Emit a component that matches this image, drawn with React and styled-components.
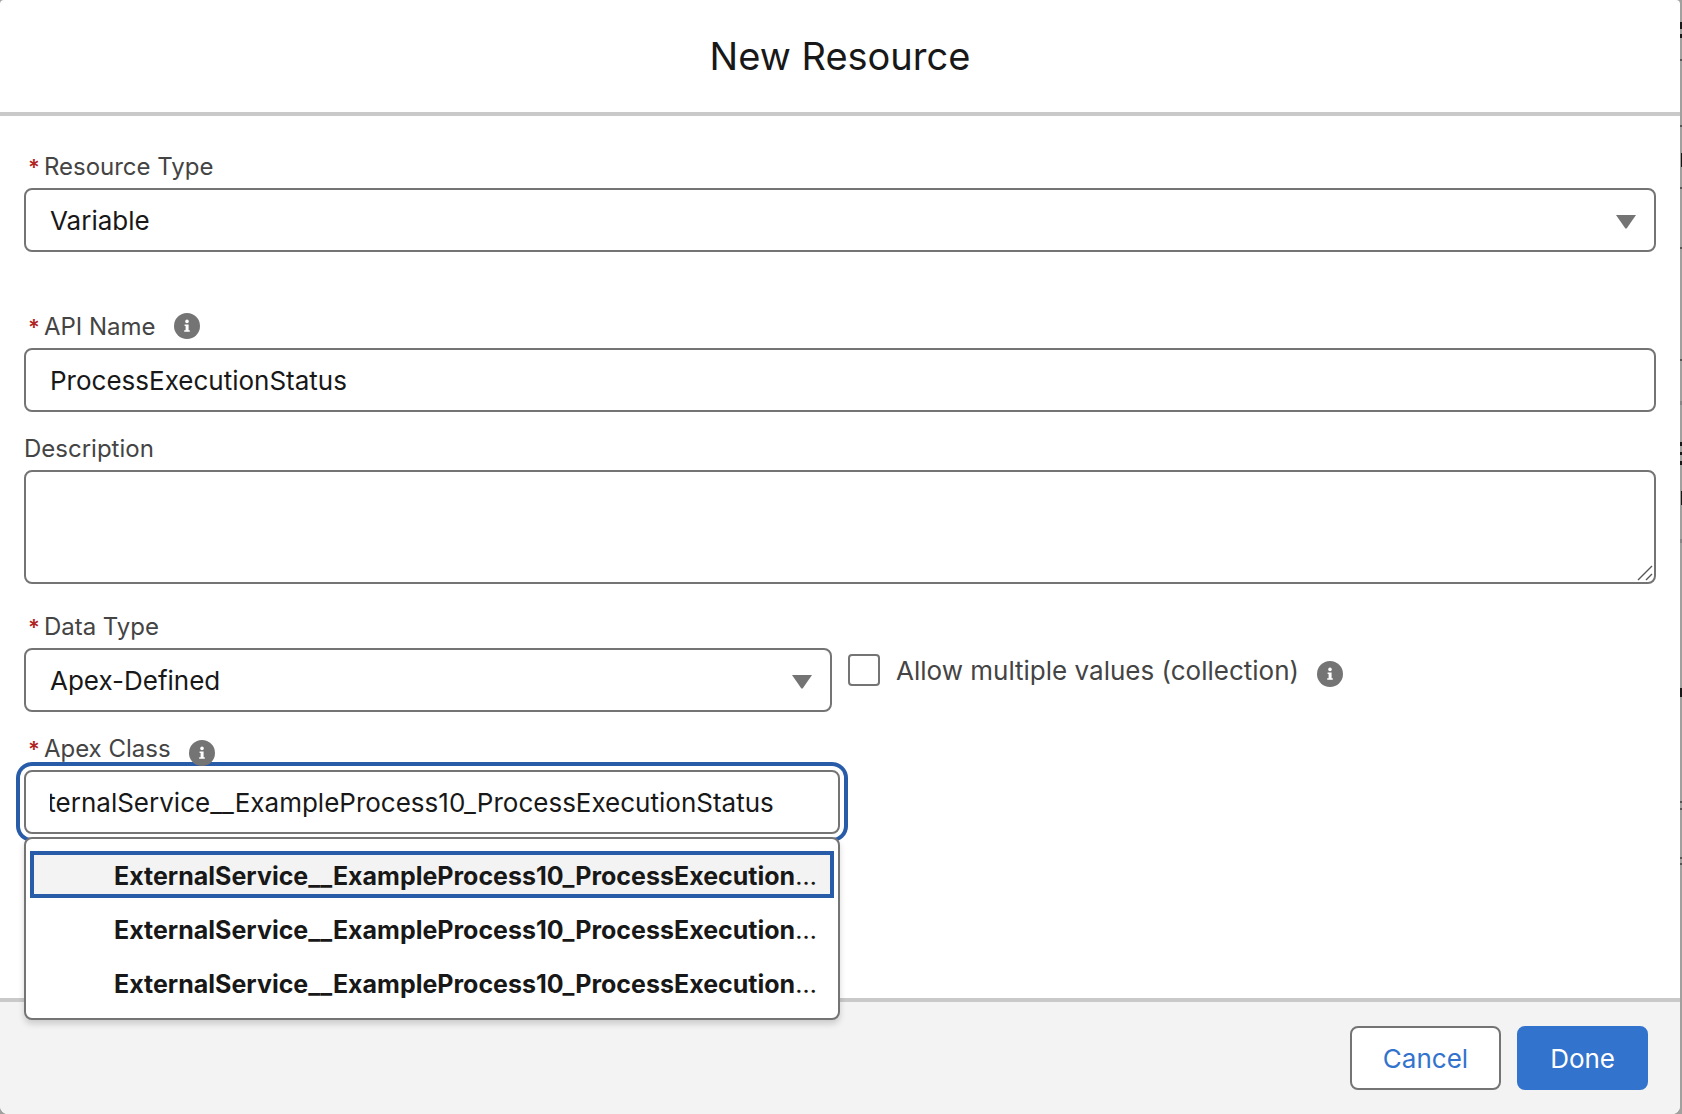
import React, { useLayoutEffect, useRef, useState } from 'react';
import styled, { createGlobalStyle } from 'styled-components';

const GlobalStyle = createGlobalStyle`
    * {
        box-sizing: border-box;
    }

    body {
        margin: 0;
        background: #a0a09f;
        color: #181818;
        font-family: Inter, "Liberation Sans", sans-serif;
        font-size: 26px;
    }
`;

const Page = styled.div`
    position: relative;
    display: flex;
    min-height: 100vh;
    padding-right: 2px;
`;

const PageEdge = styled.svg`
    position: absolute;
    top: 0;
    right: 0;
`;

const Modal = styled.section`
    display: flex;
    flex: 1;
    flex-direction: column;
    min-width: 0;
    border-radius: 4px 4px 8px 8px;
    background: #fff;
`;

const Header = styled.header`
    padding: 32px 24px;
    border-bottom: 4px solid #c9c9c9;
    text-align: center;
`;

const Title = styled.h1`
    margin: 0;
    font-size: 38px;
    font-weight: 400;
    line-height: 48px;
`;

const Body = styled.form`
    flex: 1;
    padding: 32px 24px;
`;

const Field = styled.div`
    width: ${props => props.$half ? '50%' : 'auto'};
    margin-bottom: ${props => props.$space || 18}px;
`;

const LabelRow = styled.div`
    display: flex;
    align-items: center;
    height: 36px;
    margin-bottom: 4px;
`;

const Label = styled.label`
    padding-top: 2px;
    color: #444;
    font-size: 24px;
    line-height: 36px;
`;

const Required = styled.abbr`
    margin: 0 4px;
    color: #b0241f;
    font-size: 22px;
    font-weight: 600;
    text-decoration: none;
`;

const InfoButton = styled.button`
    position: relative;
    z-index: 2;
    display: block;
    width: 26px;
    height: 26px;
    margin: ${props => props.$drop || 0}px 0 0 18px;
    padding: 0;
    border: 0;
    background: none;
`;

const Control = styled.div`
    position: relative;
`;

const Input = styled.input`
    display: block;
    width: 100%;
    height: 64px;
    padding: 0 ${props => props.$focused ? 64 : 24}px 0 24px;
    border: 2px solid #747474;
    border-radius: 8px;
    outline: none;
    background: #fff;
    color: inherit;
    font: inherit;
    box-shadow: ${props => props.$focused ? '0 0 0 4px #fff, 0 0 0 8px #285ca8' : 'none'};
`;

const Select = styled.select`
    display: block;
    width: 100%;
    height: 64px;
    padding: 0 64px 0 24px;
    border: 2px solid #747474;
    border-radius: 8px;
    appearance: none;
    background: #fff;
    color: inherit;
    font: inherit;
`;

const SelectArrow = styled.svg`
    position: absolute;
    top: 27px;
    right: 20px;
    pointer-events: none;
`;

const TextArea = styled.textarea`
    display: block;
    width: 100%;
    height: 114px;
    padding: 12px 24px;
    border: 2px solid #747474;
    border-radius: 8px;
    background: #fff;
    color: inherit;
    font: inherit;
    resize: none;
`;

const Grip = styled.svg`
    position: absolute;
    right: 3px;
    bottom: 3px;
    pointer-events: none;
`;

const Columns = styled.div`
    display: grid;
    grid-template-columns: 1fr 1fr;
    gap: 16px;
`;

const CheckboxRow = styled.div`
    display: flex;
    align-items: center;
    height: 32px;
    margin-top: 46px;
`;

const Checkbox = styled.input`
    flex: none;
    width: 32px;
    height: 32px;
    margin: 0 16px 0 0;
    border: 2px solid #747474;
    border-radius: 4px;
    appearance: none;
    background: #fff;

    &:checked {
        background: #3273cd;
    }
`;

const CheckboxLabel = styled.label`
    padding-top: 2px;
    color: #444;
    line-height: 32px;
`;

const Menu = styled.ul`
    position: absolute;
    top: 67px;
    left: 0;
    right: 0;
    z-index: 1;
    display: flex;
    flex-direction: column;
    gap: 7px;
    margin: 0;
    padding: 12px 4px;
    border: 2px solid #747474;
    border-radius: 8px;
    background: #fff;
    list-style: none;
    box-shadow: 0 4px 6px rgba(0, 0, 0, 0.16);
`;

const Option = styled.li`
    overflow: hidden;
    height: 47px;
    padding: 4px 12px 0 84px;
    background: ${props => props.$active ? '#f3f3f3' : '#fff'};
    box-shadow: ${props => props.$active ? 'inset 0 0 0 4px #285ca8' : 'none'};
    font-size: 25px;
    line-height: 43px;
    text-overflow: ellipsis;
    white-space: nowrap;
`;

const Footer = styled.footer`
    display: flex;
    justify-content: flex-end;
    gap: 16px;
    padding: 24px 32px;
    border-top: 4px solid #c9c9c9;
    border-radius: 0 0 8px 8px;
    background: #f3f3f3;
`;

const Button = styled.button`
    height: 64px;
    padding: 0 31px;
    border: 2px solid ${props => props.$primary ? '#3273cd' : '#747474'};
    border-radius: 8px;
    background: ${props => props.$primary ? '#3273cd' : '#fff'};
    color: ${props => props.$primary ? '#fff' : '#3273cd'};
    font: inherit;
`;

const className = 'ExternalService__ExampleProcess10_ProcessExecutionStatus';
const options = [className, className, className];

const Info = ({ label, drop }) => (
    <InfoButton type="button" aria-label={label} $drop={drop}>
        <svg width="26" height="26" viewBox="0 0 26 26">
            <circle cx="13" cy="13" r="13" fill="#747474" />
            <circle cx="13" cy="8.4" r="1.8" fill="#fff" />
            <path d="M10.6 11.4H14.6V17.2H15.8V18.8H10.2V17.2H11.6V13H10.6Z" fill="#fff" />
        </svg>
    </InfoButton>
);

const Arrow = () => (
    <SelectArrow width="20" height="14" viewBox="0 0 20 14">
        <path d="M0 0H20L10.8 13.2Q10 14 9.2 13.2Z" fill="#747474" />
    </SelectArrow>
);

const FieldLabel = ({ id, required, children, info }) => (
    <LabelRow>
        <Label htmlFor={id}>
            {required && <Required>*</Required>}
            {children}
        </Label>
        {info}
    </LabelRow>
);

// What still shows of the flow builder to the right of the modal
const BuilderEdge = () => (
    <PageEdge width="2" height="880" aria-hidden="true">
        <path d="M0 60h2M0 126h2M0 188h2M0 248h2M0 360h2M0 802h2M0 809h2M0 858h2M0 864h2" stroke="#555" strokeWidth="2" />
        <path d="M0 403h2M0 541h2" stroke="#858585" strokeWidth="4" />
        <path d="M0 22h2v7h-2zM0 34h2v4h-2zM1 153h1v14h-1zM0 442h2v4h-2zM0 452h2v3h-2zM0 461h2v4h-2zM1 491h1v14h-1zM0 688h2v9h-2z" fill="#181818" />
    </PageEdge>
);

const App = () => {
    const [resourceType, setResourceType] = useState('Variable');
    const [apiName, setApiName] = useState('ProcessExecutionStatus');
    const [description, setDescription] = useState('');
    const [dataType, setDataType] = useState('Apex-Defined');
    const [collection, setCollection] = useState(false);
    const [apexClass, setApexClass] = useState(className);
    const apexInput = useRef(null);

    // keep the end of a long class name in view
    useLayoutEffect(() => {
        const input = apexInput.current;
        input.scrollLeft = input.scrollWidth;
    }, [apexClass]);

    return (
        <Page>
            <GlobalStyle />
            <BuilderEdge />
            <Modal>
                <Header>
                    <Title>New Resource</Title>
                </Header>
                <Body>
                    <Field $space={56}>
                        <FieldLabel id="resourceType" required>Resource Type</FieldLabel>
                        <Control>
                            <Select id="resourceType" value={resourceType} onChange={(e) => setResourceType(e.target.value)}>
                                <option>Variable</option>
                            </Select>
                            <Arrow />
                        </Control>
                    </Field>
                    <Field>
                        <FieldLabel id="apiName" required info={<Info label="API Name help" />}>API Name</FieldLabel>
                        <Input id="apiName" type="text" value={apiName} onChange={(e) => setApiName(e.target.value)} />
                    </Field>
                    <Field $space={24}>
                        <FieldLabel id="description">Description</FieldLabel>
                        <Control>
                            <TextArea id="description" value={description} onChange={(e) => setDescription(e.target.value)} />
                            <Grip width="16" height="16" viewBox="0 0 16 16">
                                <path d="M1 15L15 1M9 15L15 9" stroke="#555" strokeWidth="1.4" />
                            </Grip>
                        </Control>
                    </Field>
                    <Columns>
                        <Field>
                            <FieldLabel id="dataType" required>Data Type</FieldLabel>
                            <Control>
                                <Select id="dataType" value={dataType} onChange={(e) => setDataType(e.target.value)}>
                                    <option>Apex-Defined</option>
                                </Select>
                                <Arrow />
                            </Control>
                        </Field>
                        <CheckboxRow>
                            <Checkbox
                                id="collection"
                                type="checkbox"
                                checked={collection}
                                onChange={(e) => setCollection(e.target.checked)}
                            />
                            <CheckboxLabel htmlFor="collection">Allow multiple values (collection)</CheckboxLabel>
                            <Info label="Collection help" drop={8} />
                        </CheckboxRow>
                    </Columns>
                    <Field $half>
                        <FieldLabel id="apexClass" required info={<Info label="Apex Class help" drop={10} />}>Apex Class</FieldLabel>
                        <Control>
                            <Input
                                id="apexClass"
                                ref={apexInput}
                                type="text"
                                $focused
                                value={apexClass}
                                onChange={(e) => setApexClass(e.target.value)}
                            />
                            <Menu role="listbox">
                                {options.map((option, index) => (
                                    <Option key={index} role="option" aria-selected={index === 0} $active={index === 0}>
                                        <strong>{option}</strong>
                                    </Option>
                                ))}
                            </Menu>
                        </Control>
                    </Field>
                </Body>
                <Footer>
                    <Button type="button">Cancel</Button>
                    <Button type="button" $primary>Done</Button>
                </Footer>
            </Modal>
        </Page>
    );
};

export default App;
